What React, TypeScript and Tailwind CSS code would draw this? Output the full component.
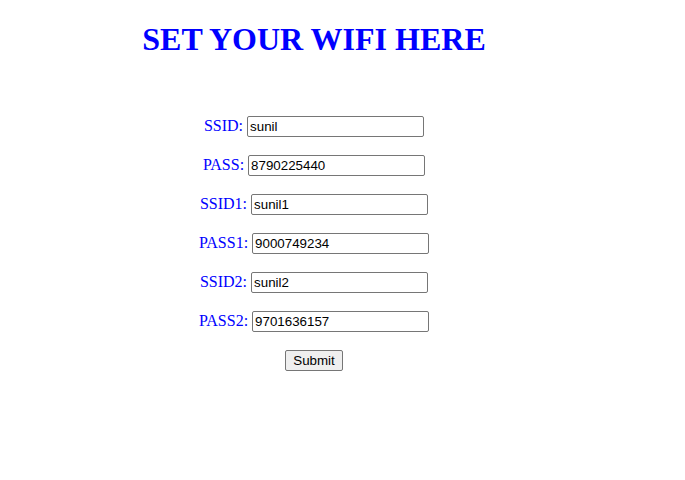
import React from "react";

const fields = [
  { label: "SSID", value: "sunil" },
  { label: "PASS", value: "8790225440" },
  { label: "SSID1", value: "sunil1" },
  { label: "PASS1", value: "9000749234" },
  { label: "SSID2", value: "sunil2" },
  { label: "PASS2", value: "9701636157" },
];

export default function App() {
  return (
    <div className="w-[685px] h-[480px] bg-white font-['Liberation_Serif',serif]">
      <div className="w-[628px] flex flex-col items-center">
        <h1 className="mt-[21px] text-[32px] font-bold leading-[37px] text-[#0000ff]">
          SET YOUR WIFI HERE
        </h1>
        <form className="mt-[56px] flex flex-col items-center gap-[16px]">
          {fields.map((f) => (
            <div key={f.label} className="h-[23px] flex items-baseline justify-center gap-[4px]">
              <label className="text-[16px] text-[#0000ff]">{f.label}:</label>
              <input
                type="text"
                defaultValue={f.value}
                className="w-[177px] h-[21px] px-[2px] py-[1px] border border-[#767676] rounded-[2px] bg-white text-black text-[13.33px] font-['Liberation_Sans',Arial,sans-serif] outline-none"
              />
            </div>
          ))}
          <div className="h-[23px] flex items-center justify-center pt-[2px]">
            <button
              type="button"
              className="h-[21px] px-[7px] border border-[#767676] rounded-[2px] bg-[#efefef] text-black text-[13.33px] font-['Liberation_Sans',Arial,sans-serif]"
            >
              Submit
            </button>
          </div>
        </form>
      </div>
    </div>
  );
}
